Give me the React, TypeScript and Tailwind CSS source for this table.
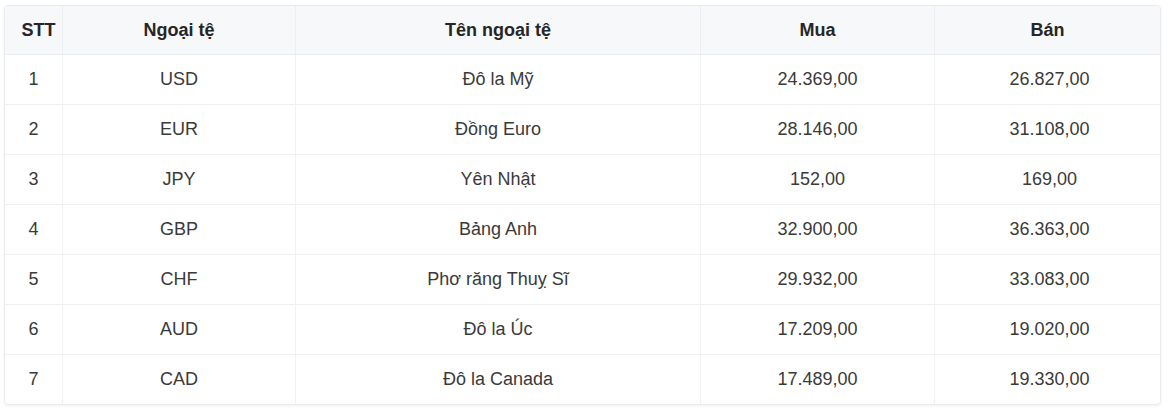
import React from "react";

const rows = [
  ["1", "USD", "Đô la Mỹ", "24.369,00", "26.827,00"],
  ["2", "EUR", "Đồng Euro", "28.146,00", "31.108,00"],
  ["3", "JPY", "Yên Nhật", "152,00", "169,00"],
  ["4", "GBP", "Bảng Anh", "32.900,00", "36.363,00"],
  ["5", "CHF", "Phơ răng Thuỵ Sĩ", "29.932,00", "33.083,00"],
  ["6", "AUD", "Đô la Úc", "17.209,00", "19.020,00"],
  ["7", "CAD", "Đô la Canada", "17.489,00", "19.330,00"],
];

const cols = "grid grid-cols-[58px_233px_405px_234px_225px]";

export default function App() {
  return (
    <div
      className="w-[1170px] h-[409px] bg-white pt-[5px] pl-[4px]"
      style={{ fontFamily: '"Liberation Sans", Arial, sans-serif' }}
    >
      <div className="w-[1157px] rounded-[4px] border border-[#e9ebef] overflow-hidden shadow-[0_1px_3px_rgba(0,0,0,0.06)]">
        <div className={`${cols} h-[49px] bg-[#f7f8fa] border-b border-[#e9ebef] text-[18px] font-bold text-[#262626]`}>
          <div className="flex items-center justify-center pl-[10px] border-r border-[#eceef1]">STT</div>
          <div className="flex items-center justify-center border-r border-[#eceef1]">Ngoại tệ</div>
          <div className="flex items-center justify-center border-r border-[#eceef1]">Tên ngoại tệ</div>
          <div className="flex items-center justify-center border-r border-[#eceef1]">Mua</div>
          <div className="flex items-center justify-center">Bán</div>
        </div>
        {rows.map((r, i) => (
          <div
            key={i}
            className={`${cols} text-[18px] text-[#3a3a3a] ${
              i < rows.length - 1 ? "h-[50px] border-b border-[#eef0f2]" : "h-[49px]"
            }`}
          >
            {r.map((c, j) => (
              <div
                key={j}
                className={`flex items-center justify-center ${j < 4 ? "border-r border-[#f0f1f3]" : ""} ${j === 4 ? "pl-[4px]" : ""}`}
              >
                {c}
              </div>
            ))}
          </div>
        ))}
      </div>
    </div>
  );
}
